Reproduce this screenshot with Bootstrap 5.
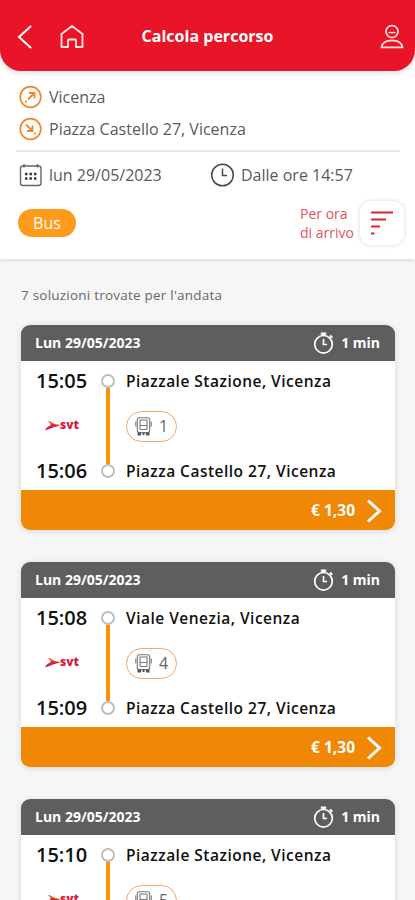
<!DOCTYPE html>
<html lang="it">
<head>
<meta charset="utf-8">
<meta name="viewport" content="width=device-width, initial-scale=1">
<title>Calcola percorso</title>
<link href="https://cdn.jsdelivr.net/npm/bootstrap@5.3.0/dist/css/bootstrap.min.css" rel="stylesheet">
<style>
  body { font-family: "Open Sans", "Noto Sans", sans-serif; background: #f6f6f6; height: 900px; overflow: hidden; color: #111; }
  svg { display: block; flex: none; overflow: visible; }
  .search-panel { background: #fff; height: 259px; box-shadow: 0 1px 4px rgba(0,0,0,.14); }
  .app-bar { background: #e81528; height: 71px; border-radius: 0 0 21px 21px; box-shadow: 0 2px 5px rgba(0,40,50,.16); padding: 2px 11px 0 17px; color: #fff; }
  .app-title { font-size: 16px; font-weight: 700; letter-spacing: .02px; transform: translateX(-3px); }
  .bar-side { width: 112px; }
  .home-icon { margin-left: 27px; }
  .criteria { padding: 10px 11px 0 18px; color: #5a5a5a; font-size: 16px; line-height: 32px; }
  .criterion { height: 32px; gap: 7px; }
  .split { height: 2px; background: #e9e9e9; margin: 5px 4px 7px -2px; }
  .date-cell { width: 192px; }
  .mode-row { padding-top: 10px; }
  .mode-pill { background: #ff9a1a; color: #fff; width: 58px; height: 28px; font-size: 16px; line-height: 28px; }
  .sort-text { color: #e0555f; font-size: 14px; line-height: 19px; width: 60px; white-space: nowrap; }
  .sort-btn { width: 44px; height: 44px; border-radius: 11px; background: #fff; box-shadow: 0 0 4px rgba(0,0,0,.17); }
  .found { font-size: 13.5px; letter-spacing: .22px; color: #686868; line-height: 20px; margin: 26px 0 20px; }
  .results { padding: 0 20px 0 21px; }
  .trip { height: 205px; margin-bottom: 32px; border-radius: 9px; background: #fff; box-shadow: 0 1px 6px rgba(0,0,0,.13); }
  .trip-head { height: 36px; background: #5e5e5e; color: #fff; font-size: 14px; font-weight: 700; padding: 0 15px 1px 14px; }
  .trip-body { height: 129px; padding: 0 15px 0 15px; }
  .times { width: 51px; font-size: 20px; font-weight: 600; padding: 6px 0 6px; line-height: 27px; white-space: nowrap; }
  .rail { width: 14px; margin: 0 11px 0 14px; padding: 13px 0 12px; }
  .stop { width: 14px; height: 14px; border: 2px solid #bdbdbd; border-radius: 50%; }
  .leg { width: 4px; background: #f99200; }
  .places { font-size: 15.5px; letter-spacing: .49px; font-weight: 600; padding: 7px 0 5px; line-height: 27px; white-space: nowrap; }
  .line-pill { width: 51px; height: 31px; border: 1px solid #f7a468; border-radius: 16px; font-size: 16px; letter-spacing: 0; font-weight: 400; color: #666; gap: 7px; }
  .trip-foot { height: 40px; background: #f08705; color: #fff; font-size: 15.5px; font-weight: 700; padding: 2px 13px 0; gap: 11px; }
</style>
<script src="https://cdn.jsdelivr.net/npm/bootstrap@5.3.0/dist/js/bootstrap.bundle.min.js"></script>
</head>
<body>
<svg width="0" height="0" class="position-absolute" aria-hidden="true">
  <symbol id="i-watch" viewBox="0 0 22 22"><g fill="none" stroke="#fff" stroke-width="1.7"><circle cx="11.5" cy="12.3" r="8.8"/><path d="M11.5 7v5.5h3.6"/><path d="M8.800 1.700h5.4M11.5 1.5v2M18 3.500l2.200 2.200" stroke-width="2.200"/></g></symbol>
  <symbol id="i-bus" viewBox="0 0 17 19"><g fill="none" stroke="#777" stroke-width="1.1"><rect x="2.3" y=".8" width="12.4" height="14.8" rx="2"/><path d="M5 3h7v5.5H5zM.8 4.5v5M16.2 4.5v5M5 8.5v4M12 8.5v4M5 12.5h7"/></g><path d="M2.500 15.500H6V18.500H2.500zM11 15.500h3.500v3H11zM7.500 15.500h2V18h-2z" fill="#555"/></symbol>
  <symbol id="i-bird" viewBox="0 0 16 12"><path d="M3 1c2.500 0 4 1.900 6 2.700 2 .9 4 .8 6.500 1.400-3 1.500-5 1.800-7 2.200C7 8 6 8.500 3.500 9c.8-1.500 1.500-2 2-2.800L5.500 4C5 2.500 4.300 1.800 3 1z" fill="#e0301c"/><path d="M0 10.200C1.500 7.500 3.500 5.500 7 5l2 1.700C5 8 3.500 10 0 10.200z" fill="#c21f7c"/><path d="M3 1c2 0 3.500 1 5 2.200L6 4.500C5 2.800 4.300 1.800 3 1z" fill="#ee7a1c"/></symbol>
  <symbol id="i-next" viewBox="0 0 16 24"><path d="M2 1.500l11.500 10.500L2 22.500" fill="none" stroke="#fff" stroke-width="3"/></symbol>
</svg>

<section class="search-panel">
  <header class="app-bar d-flex align-items-center justify-content-between">
    <div class="bar-side d-flex align-items-center">
      <svg width="15" height="24" viewBox="0 0 15 24"><path d="M13.500 1.500L2 12l11.500 10.500" fill="none" stroke="#fff" stroke-width="2" stroke-linecap="round"/></svg>
      <svg class="home-icon" width="26" height="24" viewBox="0 0 26 24"><path d="M2.500 9L13 1l10.500 8V22h-6.500v-6.500q0-1-1-1h-6q-1 0-1 1v6.500H2.500z" fill="none" stroke="#ffe6e2" stroke-width="1.800" stroke-linejoin="round"/></svg>
    </div>
    <h1 class="app-title m-0">Calcola percorso</h1>
    <div class="bar-side d-flex justify-content-end">
      <svg width="24" height="24" viewBox="0 0 24 24"><g fill="none" stroke="#ffe6e2" stroke-width="1.700"><circle cx="12" cy="6.500" r="6"/><path d="M8.500 8q1.700-1.200 3.500 0 1.700-1.200 3.500 0" stroke-width="1.300"/><path d="M1.500 22.300c.8-5 4-7 10.500-7s9.700 2 10.500 7z"/></g></svg>
    </div>
  </header>

  <div class="criteria">
    <div class="criterion d-flex align-items-center">
      <svg width="24" height="24" viewBox="0 0 24 24"><g fill="none" stroke="#f2882b" stroke-width="1.700"><circle cx="12.500" cy="12" r="10.300"/><path d="M10 14.500l6-6M11 8h5.500v5.500" stroke-width="1.900"/><path d="M7.300 17.200l1.400-1.400"/></g></svg>
      <span>Vicenza</span>
    </div>
    <div class="criterion d-flex align-items-center">
      <svg width="24" height="24" viewBox="0 0 24 24"><g fill="none" stroke="#f2882b" stroke-width="1.700"><circle cx="12.500" cy="12" r="10.300"/><path d="M8 7.500l5.500 5.500M14.500 8.500v5.500H9" stroke-width="1.900"/><path d="M16.300 15.800l1.400 1.400"/></g></svg>
      <span>Piazza Castello 27, Vicenza</span>
    </div>
    <div class="split"></div>
    <div class="d-flex align-items-center">
      <div class="criterion date-cell d-flex align-items-center">
        <svg width="24" height="24" viewBox="0 0 24 24"><rect x="2.500" y="3" width="20.500" height="19.500" rx="2.500" fill="none" stroke="#666" stroke-width="1.400"/><path d="M6 1v3.500M19.500 1v3.500" stroke="#666" stroke-width="1.400"/><path d="M7 11h2.400M11.500 11h2.400M16 11h2.400M7 15.500h2.400M11.500 15.500h2.400M16 15.500h2.400" stroke="#333" stroke-width="2.400"/></svg>
        <span>lun 29/05/2023</span>
      </div>
      <div class="criterion d-flex align-items-center">
        <svg width="24" height="24" viewBox="0 0 24 24"><g fill="none" stroke="#4a4a4a" stroke-width="1.500"><circle cx="12.500" cy="12" r="10.800"/><path d="M12.500 5.500v7h4.500"/></g></svg>
        <span>Dalle ore 14:57</span>
      </div>
    </div>
    <div class="mode-row d-flex align-items-center">
      <span class="mode-pill rounded-pill text-center">Bus</span>
      <span class="sort-text ms-auto">Per ora<br>di arrivo</span>
      <button type="button" class="sort-btn btn border-0 p-0 d-flex align-items-center justify-content-center" aria-label="Ordina">
        <svg width="22" height="24" viewBox="0 0 22 24"><path d="M0 1.500h22M0 8.500h15M0 15.500h9M0 22.500h3.500" stroke="#dd2233" stroke-width="1.900"/></svg>
      </button>
    </div>
  </div>
</section>

<main class="results">
  <p class="found">7 soluzioni trovate per l'andata</p>
  <div id="trips"></div>
</main>

<template id="trip-tpl">
  <article class="trip overflow-hidden">
    <div class="trip-head d-flex align-items-center justify-content-between">
      <span>Lun 29/05/2023</span>
      <span class="d-flex align-items-center gap-2"><svg width="21" height="22"><use href="#i-watch" width="22" height="22"/></svg>1 min</span>
    </div>
    <div class="trip-body d-flex">
      <div class="times d-flex flex-column justify-content-between">
        <span data-f="dep"></span>
        <svg class="mx-auto" width="34" height="12"><use href="#i-bird" width="16" height="12"/><text x="15" y="9" font-size="12" font-weight="800" fill="#dc1b3c" textLength="19" lengthAdjust="spacingAndGlyphs">svt</text></svg>
        <span data-f="arr"></span>
      </div>
      <div class="rail d-flex flex-column align-items-center">
        <i class="stop"></i><i class="leg flex-grow-1"></i><i class="stop"></i>
      </div>
      <div class="places d-flex flex-column justify-content-between">
        <span data-f="from"></span>
        <span class="line-pill d-flex align-items-center justify-content-center"><svg width="17" height="19"><use href="#i-bus"/></svg><span data-f="line"></span></span>
        <span data-f="to"></span>
      </div>
    </div>
    <div class="trip-foot d-flex align-items-center justify-content-end"><span>€ 1,30</span><svg width="16" height="24"><use href="#i-next"/></svg></div>
  </article>
</template>
<script>
  const trips = [
    { dep: "15:05", arr: "15:06", from: "Piazzale Stazione, Vicenza", line: "1", to: "Piazza Castello 27, Vicenza" },
    { dep: "15:08", arr: "15:09", from: "Viale Venezia, Vicenza", line: "4", to: "Piazza Castello 27, Vicenza" },
    { dep: "15:10", arr: "", from: "Piazzale Stazione, Vicenza", line: "5", to: "" }
  ];
  const tpl = document.getElementById("trip-tpl");
  for (const t of trips) {
    const node = tpl.content.cloneNode(true);
    node.querySelectorAll("[data-f]").forEach(e => { e.textContent = t[e.dataset.f] || "\u00a0"; });
    document.getElementById("trips").append(node);
  }
</script>
</body>
</html>
